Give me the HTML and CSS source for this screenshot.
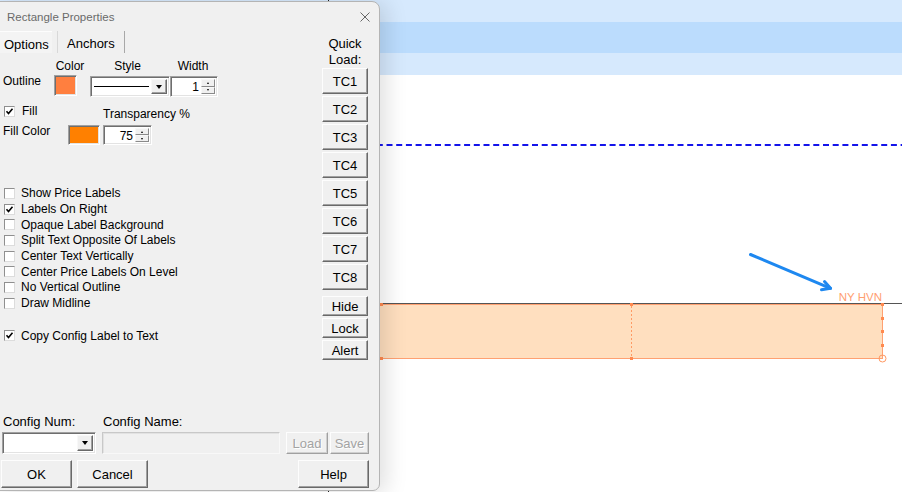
FILE: index.html
```html
<!DOCTYPE html>
<html>
<head>
<meta charset="utf-8">
<title>Rectangle Properties</title>
<link rel="stylesheet" href="styles.css">
</head>
<body>
<div class="chart">
  <div class="band"></div>
  <div class="band dark"></div>
  <div class="band"></div>
  <svg class="plot" width="902" height="492" viewBox="0 0 902 492">
    <line x1="328.5" y1="0" x2="328.5" y2="492" stroke="#222" stroke-width="1"/>
    <line x1="0" y1="145" x2="902" y2="145" stroke="#1414ea" stroke-width="2" stroke-dasharray="6 3.7" stroke-dashoffset="1.5"/>
    <line x1="0" y1="303.5" x2="902" y2="303.5" stroke="#555" stroke-width="1"/>
    <rect x="-5" y="304.5" width="887.5" height="54" fill="#ffdfbf" stroke="#ffa172" stroke-width="1"/>
    <line x1="631.5" y1="306" x2="631.5" y2="357" stroke="#ff9a64" stroke-width="1" stroke-dasharray="2 2"/>
    <g fill="#ff8a50">
      <rect x="380" y="303" width="3" height="3"/>
      <rect x="630" y="303" width="3" height="3"/>
      <rect x="881" y="303" width="3" height="3"/>
      <rect x="380" y="357" width="3" height="3"/>
      <rect x="630" y="357" width="3" height="3"/>
      <rect x="881" y="317" width="3" height="3"/>
      <rect x="881" y="330" width="3" height="3"/>
      <rect x="881" y="344" width="3" height="3"/>
    </g>
    <circle cx="882.5" cy="358.5" r="3.5" fill="none" stroke="#ff9a64" stroke-width="1"/>
    <text class="lbl" x="882" y="301" text-anchor="end">NY HVN</text>
    <path d="M750.5 254.5 L830.5 288.3" stroke="#1e88f0" stroke-width="3" stroke-linecap="round" fill="none"/>
    <path d="M824.5 281.5 L830.5 288.3 L821.5 289.8" stroke="#1e88f0" stroke-width="3" stroke-linecap="round" stroke-linejoin="round" fill="none"/>
  </svg>
</div>

<div class="dialog">
  <div class="titlebar">
    <span class="title">Rectangle Properties</span>
    <svg class="close" width="10" height="10" viewBox="0 0 10 10"><path d="M0.5 0.5 L9.5 9.5 M9.5 0.5 L0.5 9.5" stroke="#666" stroke-width="1"/></svg>
  </div>

  <div class="upper">
    <div class="panel">
      <div class="tabs">
        <div class="tab active">Options</div>
        <div class="tab">Anchors</div>
      </div>

      <div class="outline-labels">
        <span class="lab-color">Color</span>
        <span class="lab-style">Style</span>
        <span class="lab-width">Width</span>
      </div>

      <div class="outline-row">
        <span class="row-label outline-label">Outline</span>
        <span class="swatch outline-swatch"></span>
        <div class="combo style-combo">
          <span class="line-sample"></span>
          <span class="drop"><i class="tri"></i></span>
        </div>
        <div class="spin width-spin">
          <span class="val">1</span>
          <span class="spinbtns"><span class="sb"><i class="mini up"></i></span><span class="sb"><i class="mini down"></i></span></span>
        </div>
      </div>

      <div class="fill-row">
        <div class="check fill-check"><span class="box"><svg width="9" height="9" viewBox="0 0 9 9"><path d="M1.5 4.3 L3.5 6.5 L7.5 1.8" stroke="#000" stroke-width="1.6" fill="none"/></svg></span>Fill</div>
        <span class="trans-label">Transparency %</span>
      </div>

      <div class="fillcolor-row">
        <span class="row-label fill-label">Fill Color</span>
        <span class="swatch fill-swatch"></span>
        <div class="spin trans-spin">
          <span class="val">75</span>
          <span class="spinbtns"><span class="sb"><i class="mini up"></i></span><span class="sb"><i class="mini down"></i></span></span>
        </div>
      </div>

      <div class="checklist">
        <div class="check"><span class="box"></span>Show Price Labels</div>
        <div class="check"><span class="box"><svg width="9" height="9" viewBox="0 0 9 9"><path d="M1.5 4.3 L3.5 6.5 L7.5 1.8" stroke="#000" stroke-width="1.6" fill="none"/></svg></span>Labels On Right</div>
        <div class="check"><span class="box"></span>Opaque Label Background</div>
        <div class="check"><span class="box"></span>Split Text Opposite Of Labels</div>
        <div class="check"><span class="box"></span>Center Text Vertically</div>
        <div class="check"><span class="box"></span>Center Price Labels On Level</div>
        <div class="check"><span class="box"></span>No Vertical Outline</div>
        <div class="check"><span class="box"></span>Draw Midline</div>
      </div>

      <div class="check copy"><span class="box"><svg width="9" height="9" viewBox="0 0 9 9"><path d="M1.5 4.3 L3.5 6.5 L7.5 1.8" stroke="#000" stroke-width="1.6" fill="none"/></svg></span>Copy Config Label to Text</div>
    </div>

    <div class="quick">
      <div class="quick-title">Quick<br>Load:</div>
      <div class="tc-list">
        <div class="btn tc">TC1</div>
        <div class="btn tc">TC2</div>
        <div class="btn tc">TC3</div>
        <div class="btn tc">TC4</div>
        <div class="btn tc">TC5</div>
        <div class="btn tc">TC6</div>
        <div class="btn tc">TC7</div>
        <div class="btn tc">TC8</div>
      </div>
      <div class="small-list">
        <div class="btn sm">Hide</div>
        <div class="btn sm">Lock</div>
        <div class="btn sm">Alert</div>
      </div>
    </div>
  </div>

  <div class="config">
    <div class="config-labels">
      <span class="cl-num">Config Num:</span>
      <span class="cl-name">Config Name:</span>
    </div>
    <div class="config-row">
      <div class="combo num-combo"><span class="drop"><i class="tri"></i></span></div>
      <div class="namebox"></div>
      <div class="btn disabled load">Load</div>
      <div class="btn disabled save">Save</div>
    </div>
    <div class="action-row">
      <div class="btn big ok">OK</div>
      <div class="btn big cancel">Cancel</div>
      <div class="btn big help">Help</div>
    </div>
  </div>
</div>
</body>
</html>
```

FILE: styles.css
```css
html, body {
  margin: 0;
  padding: 0;
}
body {
  width: 902px;
  height: 492px;
  overflow: hidden;
  position: relative;
  background: #fff;
  font-family: "Liberation Sans", Arial, sans-serif;
  color: #000;
}

/* ---------- chart canvas ---------- */
.chart {
  position: relative;
  width: 902px;
  height: 492px;
  background: #fff;
}
.band {
  height: 22px;
  background: #d6e9fd;
}
.band.dark {
  height: 31px;
  background: #bbdcfd;
}
.plot {
  position: absolute;
  left: 0;
  top: 0;
}
.lbl {
  font-family: "Liberation Sans", Arial, sans-serif;
  font-size: 11.5px;
  fill: #ffa070;
}

/* ---------- dialog window ---------- */
.dialog {
  position: absolute;
  left: -1px;
  top: 1px;
  width: 381px;
  height: 490px;
  box-sizing: border-box;
  background: #f0f0f0;
  border: 1px solid #b4b4b4;
  border-radius: 0 8px 7px 0;
  box-shadow: 6px 2px 22px rgba(0, 0, 0, 0.13);
  display: flex;
  flex-direction: column;
  font-size: 12px;
  z-index: 1;
}

.titlebar {
  height: 29px;
  display: flex;
  align-items: center;
  justify-content: space-between;
  padding: 0 9px 0 7px;
  flex: none;
}
.title {
  font-size: 11.5px;
  color: #6a6a6a;
}

.upper {
  display: flex;
  flex: none;
}
.panel {
  width: 321px;
}

/* tabs */
.tabs {
  display: flex;
  height: 22px;
  font-size: 13px;
}
.tab {
  box-sizing: border-box;
  height: 22px;
  line-height: 21px;
  padding-top: 2px;
}
.tab.active {
  width: 52px;
  padding-left: 4px;
  border-top: 1px solid #fdfdfd;
  background: #f4f4f4;
}
.tab + .tab {
  margin-left: 5px;
  width: 68px;
  padding-left: 9px;
  border-left: 1px solid #d8d8d8;
  border-right: 1px solid #a8a8a8;
}

/* outline section */
.outline-labels {
  display: flex;
  margin-top: 7px;
  height: 12px;
  line-height: 12px;
  padding-left: 54px;
  text-align: center;
}
.lab-color { width: 32px; }
.lab-style { width: 55px; margin-left: 14px; }
.lab-width { width: 46px; margin-left: 15px; }

.outline-row {
  display: flex;
  align-items: flex-start;
  margin-top: 3px;
  height: 22px;
}
.row-label {
  box-sizing: border-box;
  padding-left: 3px;
  line-height: 12px;
}
.outline-label { width: 54px; }

.swatch,
.combo,
.spin,
.namebox,
.box {
  box-sizing: border-box;
  border: 1px solid;
  border-color: #a0a0a0 #ffffff #ffffff #a0a0a0;
  box-shadow: inset 1px 1px 0 #6e6e6e, inset -1px -1px 0 #e3e3e3;
}
.outline-swatch {
  width: 23px;
  height: 21px;
  background: #ff7f3f;
}
.combo {
  display: flex;
  align-items: stretch;
  justify-content: flex-end;
  background: #fff;
  padding: 2px;
}
.style-combo {
  width: 80px;
  height: 21px;
  margin-left: 13px;
  margin-top: 1px;
  justify-content: space-between;
  align-items: stretch;
}
.line-sample {
  flex: 1;
  margin: 0 2px 0 1px;
  background: linear-gradient(#000, #000) no-repeat 0 50% / 100% 1px;
}
.drop {
  box-sizing: border-box;
  width: 16px;
  display: flex;
  align-items: center;
  justify-content: center;
  background: #f0f0f0;
  border: 1px solid;
  border-color: #f8f8f8 #696969 #696969 #f8f8f8;
  box-shadow: inset -1px -1px 0 #a0a0a0;
}
.tri {
  width: 0;
  height: 0;
  border-left: 3.5px solid transparent;
  border-right: 3.5px solid transparent;
  border-top: 4px solid #000;
}

.spin {
  display: flex;
  background: #fff;
  padding: 2px;
}
.width-spin {
  width: 48px;
  height: 21px;
  margin-top: 1px;
}
.spin .val {
  flex: 1;
  text-align: right;
  font-size: 12px;
  line-height: 16px;
  padding-right: 2px;
}
.spinbtns {
  width: 14px;
  display: flex;
  flex-direction: column;
}
.sb {
  flex: 1;
  box-sizing: border-box;
  display: flex;
  align-items: center;
  justify-content: center;
  background: #f0f0f0;
  border: 1px solid;
  border-color: #f8f8f8 #8a8a8a #8a8a8a #f8f8f8;
}
.mini {
  width: 0;
  height: 0;
  border-left: 1.5px solid transparent;
  border-right: 1.5px solid transparent;
}
.mini.up { border-bottom: 2px solid #000; }
.mini.down { border-top: 2px solid #000; }

/* fill section */
.fill-row {
  display: flex;
  align-items: flex-start;
  margin-top: 7px;
  height: 16px;
}
.check {
  display: flex;
  align-items: center;
  height: 15.7px;
  line-height: 12px;
  white-space: nowrap;
}
.box {
  flex: none;
  width: 11px;
  height: 11px;
  margin-left: 4px;
  margin-right: 6px;
  background: #fff;
  display: flex;
  align-items: center;
  justify-content: center;
  box-shadow: none;
  border-color: #8f8f8f #dcdcdc #dcdcdc #8f8f8f;
}
.fill-check {
  width: 103px;
  height: 12px;
  margin-top: 1px;
}
.fill-check .box { margin-right: 7px; }
.trans-label {
  margin-top: 4px;
  line-height: 12px;
}

.fillcolor-row {
  display: flex;
  align-items: flex-start;
  margin-top: 5px;
  height: 21px;
}
.fill-label { width: 68px; }
.fill-swatch {
  width: 32px;
  height: 20px;
  background: #ff8000;
}
.trans-spin {
  width: 49px;
  height: 20px;
  margin-left: 3px;
}

/* checkbox list */
.checklist {
  margin-top: 39.5px;
}
.copy {
  margin-top: 16.7px;
}

/* quick load column */
.quick {
  width: 48px;
  padding-top: 5px;
}
.quick-title {
  font-size: 13px;
  line-height: 16px;
  text-align: center;
}
.tc-list,
.small-list {
  display: flex;
  flex-direction: column;
  gap: 2px;
}
.small-list {
  margin-top: 6px;
}

/* buttons */
.btn {
  box-sizing: border-box;
  display: flex;
  align-items: center;
  justify-content: center;
  background: #f0f0f0;
  border: 1px solid;
  border-color: #fdfdfd #696969 #696969 #fdfdfd;
  box-shadow: inset -1px -1px 0 #a0a0a0;
  font-size: 13px;
  color: #000;
}
.tc {
  width: 46px;
  height: 26px;
  margin-left: 1px;
}
.sm {
  width: 46px;
  height: 20px;
  margin-left: 1px;
}

/* config section */
.config {
  margin-top: auto;
  padding-bottom: 2px;
  padding-right: 10px;
  font-size: 13px;
}
.config-labels {
  display: flex;
  height: 14px;
  line-height: 14px;
  margin-bottom: 3px;
}
.cl-num {
  width: 100px;
  padding-left: 3px;
}
.config-row {
  display: flex;
  height: 22px;
  margin-bottom: 6px;
}
.num-combo {
  width: 94px;
  height: 22px;
  margin-left: 2px;
}
.namebox {
  width: 178px;
  height: 22px;
  margin-left: 6px;
  background: #f0f0f0;
  border-color: #c8c8c8 #f8f8f8 #f8f8f8 #c8c8c8;
  box-shadow: inset 1px 1px 0 #e2e2e2;
}
.disabled {
  color: #a3a3a3;
  text-shadow: 1px 1px 0 #ffffff;
  border-color: #fdfdfd #a0a0a0 #a0a0a0 #fdfdfd;
  box-shadow: inset -1px -1px 0 #cfcfcf;
}
.load {
  width: 42px;
  margin-left: 6px;
}
.save {
  width: 39px;
  margin-left: 2px;
}
.action-row {
  display: flex;
  height: 28px;
}
.big {
  width: 71px;
  height: 28px;
}
.ok { margin-left: 1px; }
.cancel { margin-left: 5px; }
.help { margin-left: auto; }
```
